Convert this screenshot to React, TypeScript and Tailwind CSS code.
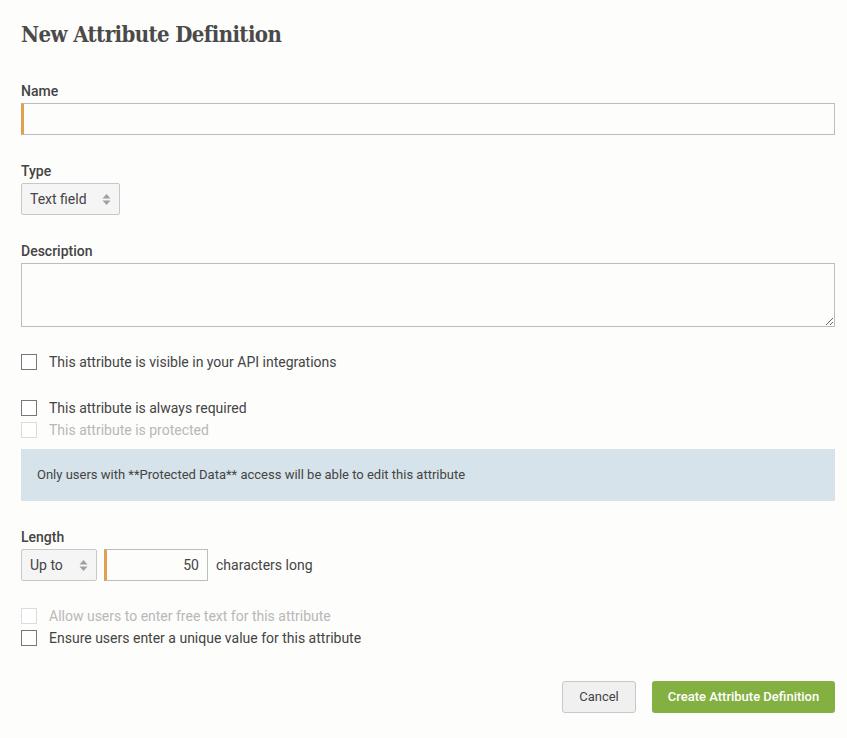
import { useState } from "react";

function SelectArrows() {
  return (
    <svg width="9" height="13" viewBox="0 0 9 13" className="text-[#a0a0a0]">
      <path d="M4.5 1 L8.5 5.5 L0.5 5.5 Z" fill="currentColor" />
      <path d="M4.5 12 L8.5 7.5 L0.5 7.5 Z" fill="currentColor" />
    </svg>
  );
}

function Checkbox({ label, disabled }: { label: string; disabled?: boolean }) {
  return (
    <label className="flex h-[22px] items-center">
      <span
        className={
          disabled
            ? "h-4 w-4 border border-[#dcdcdc] bg-white"
            : "h-4 w-4 border border-[#777] bg-white"
        }
      />
      <span className={disabled ? "ml-3 text-[14px] text-[#b8b8b8]" : "ml-3 text-[14px] text-[#444]"}>
        {label}
      </span>
    </label>
  );
}

export default function App() {
  const [name, setName] = useState("");
  const [length, setLength] = useState("50");

  return (
    <div className="min-h-[738px] bg-[#fdfdfb] pl-[21px] pr-[12px] pt-[20px] text-[#444]" style={{ fontFamily: "Roboto, 'Liberation Sans', sans-serif" }}>
      <h1
        className="text-[22px] font-bold leading-[28px] tracking-[-0.6px] text-[#4a4a4a] font-stretch-condensed"
        style={{ fontFamily: "'DejaVu Serif Condensed', 'DejaVu Serif', 'Liberation Serif', serif" }}
      >
        New Attribute Definition
      </h1>

      {/* Name */}
      <div className="mt-[35px]">
        <div className="text-[14px] font-medium leading-[17px] text-[#444]">Name</div>
        <input
          value={name}
          onChange={(e) => setName(e.target.value)}
          className="mt-[3px] block h-[32px] w-full border border-[#bdbdbd] border-l-[3px] border-l-[#e0a04e] bg-[#fdfdfb] px-2 text-[14px] outline-none"
        />
      </div>

      {/* Type */}
      <div className="mt-[28px]">
        <div className="text-[14px] font-medium leading-[17px]">Type</div>
        <div className="mt-[3px] flex h-[32px] w-[99px] items-center justify-between rounded-[2px] border border-[#c8c8c8] bg-[#f5f5f5] pl-[8px] pr-[8px] pt-[1px] text-[14px]">
          <span>Text field</span>
          <SelectArrows />
        </div>
      </div>

      {/* Description */}
      <div className="mt-[28px]">
        <div className="text-[14px] font-medium leading-[17px]">Description</div>
        <textarea className="mt-[3px] block h-[64px] w-full resize-y border border-[#bdbdbd] bg-[#fdfdfb] px-2 py-1 text-[14px] outline-none" />
      </div>

      <div className="mt-[24px]">
        <Checkbox label="This attribute is visible in your API integrations" />
      </div>

      <div className="mt-[24px]">
        <Checkbox label="This attribute is always required" />
        <Checkbox label="This attribute is protected" disabled />
      </div>

      <div className="mt-[8px] flex h-[52px] items-center bg-[#d6e3ea] px-4 text-[13px] text-[#444]">
        Only users with **Protected Data** access will be able to edit this attribute
      </div>

      {/* Length */}
      <div className="mt-[28px]">
        <div className="text-[14px] font-medium leading-[17px]">Length</div>
        <div className="mt-[3px] flex items-center">
          <div className="flex h-[32px] w-[76px] items-center justify-between rounded-[2px] border border-[#c8c8c8] bg-[#f5f5f5] pl-[8px] pr-[8px] pt-[1px] text-[14px]">
            <span>Up to</span>
            <SelectArrows />
          </div>
          <input
            value={length}
            onChange={(e) => setLength(e.target.value)}
            className="ml-[7px] h-[32px] w-[104px] border border-[#bdbdbd] border-l-[3px] border-l-[#e0a04e] bg-[#fdfdfb] px-2 text-right text-[14px] outline-none"
          />
          <span className="ml-[8px] text-[14px]">characters long</span>
        </div>
      </div>

      <div className="mt-[24px]">
        <Checkbox label="Allow users to enter free text for this attribute" disabled />
        <Checkbox label="Ensure users enter a unique value for this attribute" />
      </div>

      <div className="mt-[32px] flex justify-end gap-[16px] pb-4">
        <button className="h-[32px] w-[74px] rounded-[3px] border border-[#c8c8c8] bg-[#f0f0f0] text-[13px] text-[#444]">
          Cancel
        </button>
        <button className="h-[32px] w-[183px] rounded-[3px] bg-[#84b042] text-[13px] font-medium text-white">
          Create Attribute Definition
        </button>
      </div>
    </div>
  );
}
